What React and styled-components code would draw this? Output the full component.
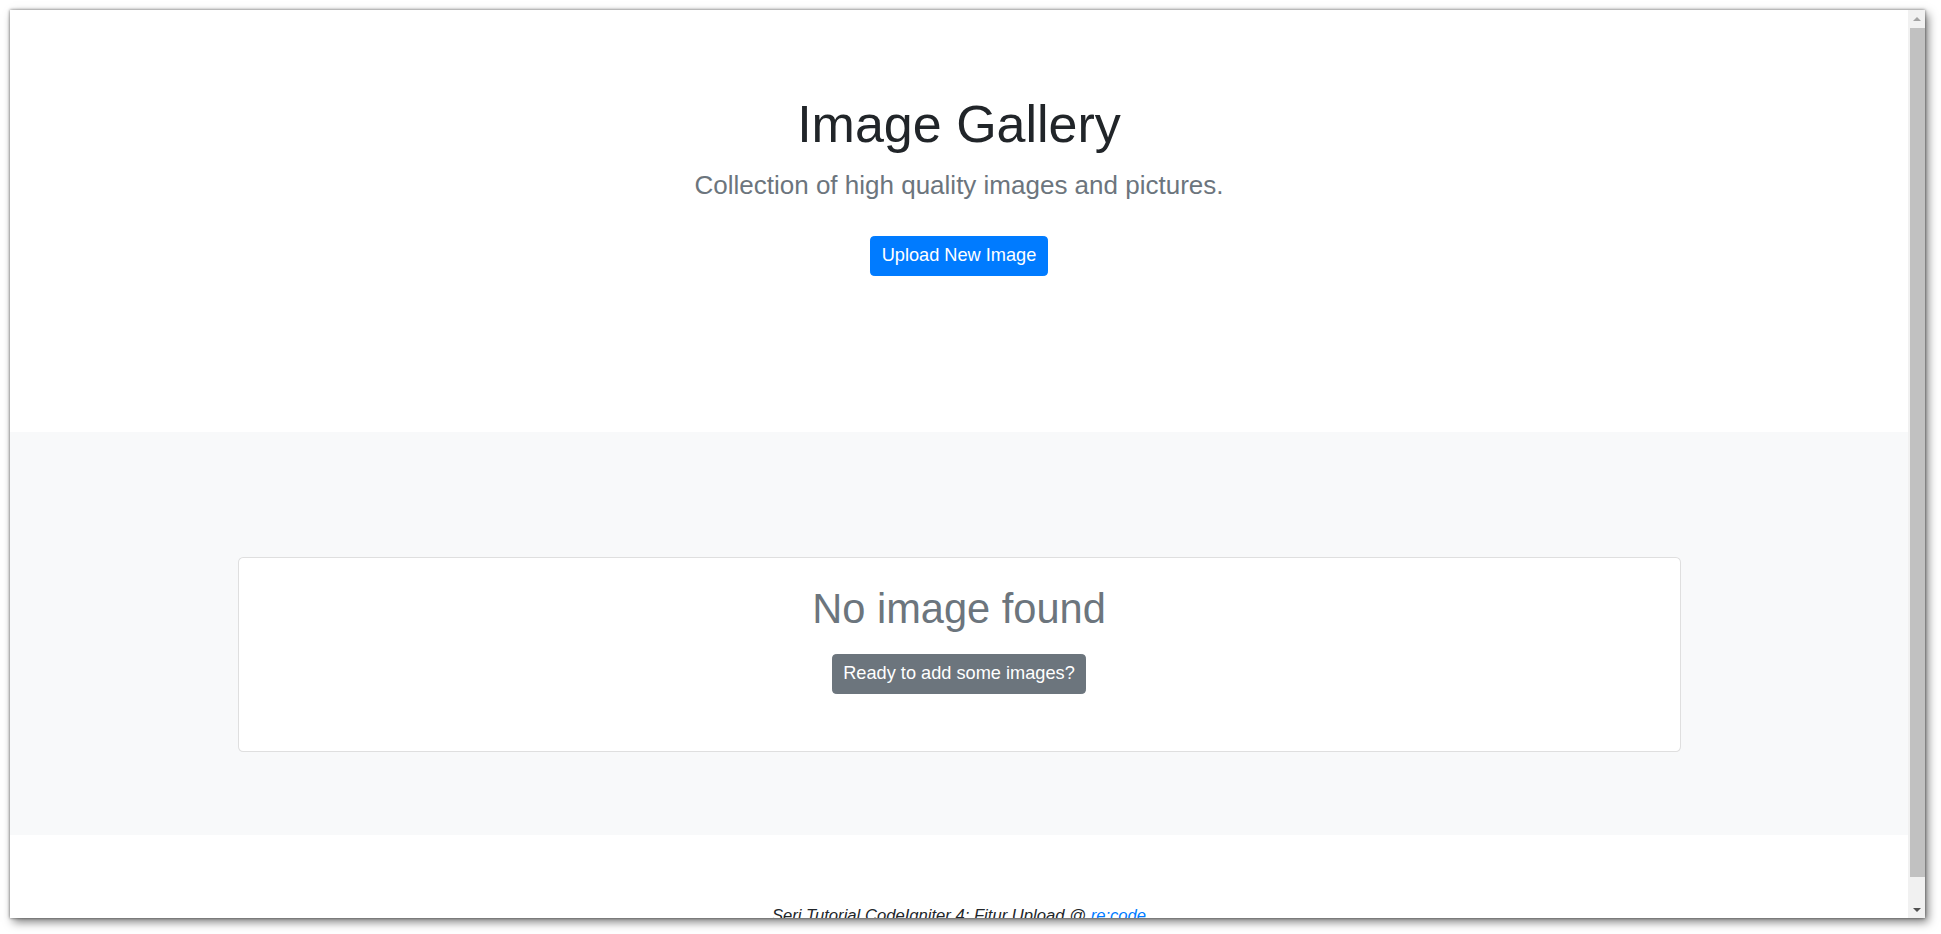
import React from "react";
import styled, { createGlobalStyle } from "styled-components";

const GlobalStyle = createGlobalStyle`
  html, body {
    margin: 0;
    padding: 0;
    background: #fff;
  }
  * {
    box-sizing: border-box;
  }
`;

const Desktop = styled.div`
  padding: 10px 0 0 10px;
  height: 934px;
  overflow: hidden;
`;

const Window = styled.div`
  display: flex;
  width: 1915px;
  height: 908px;
  background: #fff;
  box-shadow: 0 0 3px rgba(0, 0, 0, 0.55), 3px 4px 9px rgba(0, 0, 0, 0.5);
  overflow: hidden;
`;

const Viewport = styled.div`
  flex: 1;
  min-width: 0;
  overflow: hidden;
`;

// the page was shot at 130% browser zoom
const Page = styled.div`
  zoom: 1.3;
  font-family: "Liberation Sans", Arial, sans-serif;
  font-size: 16px;
  line-height: 1.5;
  color: #212529;
`;

const ScrollBar = styled.div`
  width: 17px;
  display: flex;
  flex-direction: column;
  background: #f1f1f1;
`;

const ScrollButton = styled.div`
  height: ${(p) => p.$h}px;
  display: flex;
  align-items: center;
  justify-content: center;
  padding-left: 1px;
`;

const Arrow = styled.span`
  width: 0;
  height: 0;
  border-left: 4px solid transparent;
  border-right: 4px solid transparent;
  ${(p) =>
    p.$up
      ? `border-bottom: 4px solid ${p.$dim ? "#a3a3a3" : "#505050"};`
      : `border-top: 4px solid ${p.$dim ? "#a3a3a3" : "#505050"};`}
`;

const Track = styled.div`
  flex: 1;
  display: flex;
  flex-direction: column;
  padding: 0 0 24px 2px;
`;

const Thumb = styled.div`
  flex: 1;
  background: #c1c1c1;
`;

const Jumbotron = styled.section`
  padding: 4rem 2rem;
  margin-bottom: 2rem;
  background: #fff;
  text-align: center;
`;

const Container = styled.div`
  max-width: 1140px;
  margin: 0 auto;
  padding: 0 15px;
`;

const Title = styled.h1`
  margin: 0 0 0.5rem;
  font-size: 2.5rem;
  font-weight: 500;
  line-height: 1.2;
`;

const Lead = styled.p`
  margin: 0 0 1rem;
  font-size: 1.25rem;
  font-weight: 300;
  color: #6c757d;
`;

const Actions = styled.p`
  margin: 0 0 1rem;
`;

const Button = styled.a`
  display: inline-block;
  margin: 0.5rem 0;
  padding: 0.25rem 0.5rem;
  font-size: 0.875rem;
  line-height: 1.5;
  border-radius: 0.2rem;
  color: #fff;
  text-decoration: none;
  background: ${(p) => (p.$variant === "secondary" ? "#6c757d" : "#007bff")};
  border: 1px solid ${(p) => (p.$variant === "secondary" ? "#6c757d" : "#007bff")};
  cursor: pointer;
`;

const Album = styled.div`
  padding: 6rem 0 4rem;
  background: #f8f9fa;
`;

const Card = styled.div`
  background: #fff;
  border: 1px solid rgba(0, 0, 0, 0.125);
  border-radius: 0.25rem;
`;

const CardBody = styled.div`
  padding: 1.25rem;
  text-align: center;
`;

const EmptyTitle = styled.h2`
  margin: 0 0 0.5rem;
  font-size: 2rem;
  font-weight: 500;
  line-height: 1.2;
  color: #6c757d;
`;

const Footer = styled.footer`
  padding: 3rem 0 0.75rem;
  text-align: center;
`;

const FooterText = styled.p`
  margin: 0;
`;

const Small = styled.small`
  font-size: 80%;
  font-style: italic;
`;

const Link = styled.a`
  color: #007bff;
  text-decoration: none;
`;

export default function App() {
  return (
    <>
      <GlobalStyle />
      <Desktop>
        <Window>
          <Viewport>
            <Page>
              <Jumbotron>
                <Container>
                  <Title>Image Gallery</Title>
                  <Lead>Collection of high quality images and pictures.</Lead>
                  <Actions>
                    <Button>Upload New Image</Button>
                  </Actions>
                </Container>
              </Jumbotron>
              <Album>
                <Container>
                  <Card>
                    <CardBody>
                      <EmptyTitle>No image found</EmptyTitle>
                      <Actions>
                        <Button $variant="secondary">Ready to add some images?</Button>
                      </Actions>
                    </CardBody>
                  </Card>
                </Container>
              </Album>
              <Footer>
                <Container>
                  <FooterText>
                    <Small>
                      Seri Tutorial CodeIgniter 4: Fitur Upload @ <Link>re:code</Link>
                    </Small>
                  </FooterText>
                </Container>
              </Footer>
            </Page>
          </Viewport>
          <ScrollBar>
            <ScrollButton $h={18}>
              <Arrow $up $dim />
            </ScrollButton>
            <Track>
              <Thumb />
            </Track>
            <ScrollButton $h={17}>
              <Arrow />
            </ScrollButton>
          </ScrollBar>
        </Window>
      </Desktop>
    </>
  );
}
